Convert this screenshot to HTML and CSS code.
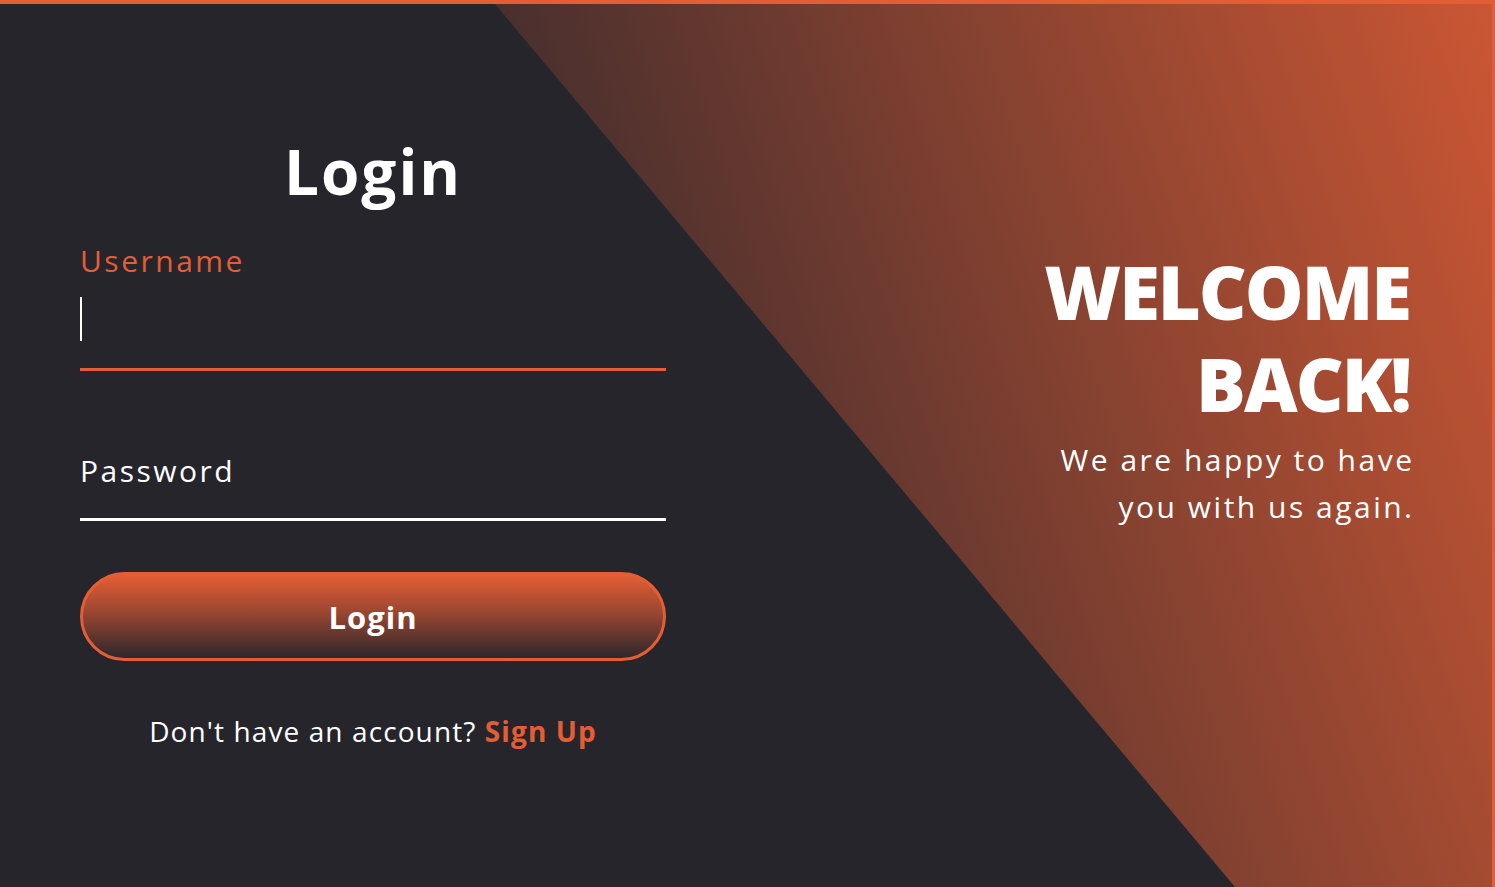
FILE: index.html
```html
<!DOCTYPE html>
<html lang="en">
<head>
<meta charset="utf-8">
<title>Login</title>
<link rel="stylesheet" href="styles.css">
</head>
<body>
<div class="page">
  <form class="login">
    <h1 class="login-title">Login</h1>
    <div class="field field-active">
      <label class="field-label">Username</label>
      <div class="field-input"><span class="caret"></span></div>
    </div>
    <div class="field">
      <label class="field-label field-label-rest">Password</label>
    </div>
    <button type="button" class="btn">Login</button>
    <p class="signup">Don't have an account? <a class="signup-link">Sign Up</a></p>
  </form>
  <div class="welcome">
    <h2 class="welcome-title">WELCOME<br>BACK!</h2>
    <p class="welcome-text">We are happy to have<br>you with us again.</p>
  </div>
</div>
</body>
</html>
```
FILE: styles.css
```css
* { box-sizing: border-box; }
html, body { margin: 0; padding: 0; }
body {
  height: 887px;
  background: #26252c;
  border-top: 4px solid #e45e35;
  border-right: 3px solid #e45e35;
  font-family: "Open Sans", "Liberation Sans", sans-serif;
  color: #ffffff;
  overflow: hidden;
}
.page {
  position: relative;
  height: 100%;
  display: flex;
  justify-content: space-between;
  align-items: flex-start;
}
.page::before {
  content: "";
  position: absolute;
  inset: 0;
  background: linear-gradient(71.5deg, #26252c 29%, #e45e35 111%);
  clip-path: polygon(495px 0, 100% 0, 100% 100%, 1235px 100%);
}
.login {
  position: relative;
  width: 586px;
  margin-left: 80px;
  padding-top: 130px;
  display: flex;
  flex-direction: column;
}
.login-title {
  margin: 0;
  text-align: center;
  font-size: 62px;
  line-height: 74px;
  font-weight: 700;
  letter-spacing: 2px;
}
.field {
  border-bottom: 3px solid #ffffff;
}
.field-active {
  margin-top: 35px;
  border-bottom-color: #e45e35;
}
.field-label {
  display: block;
  font-size: 30px;
  line-height: 36px;
  letter-spacing: 2.5px;
  color: #ffffff;
}
.field-active .field-label { color: #e45e35; }
.field-label-rest {
  margin-top: 82px;
  margin-bottom: 29px;
}
.field-input {
  padding-top: 18px;
  padding-bottom: 27px;
}
.caret {
  display: block;
  width: 2px;
  height: 44px;
  background: #ffffff;
}
.btn {
  margin-top: 51px;
  height: 89px;
  border: 3px solid #e45e35;
  border-radius: 45px;
  background: linear-gradient(to bottom, #e45e35 0%, #9a4631 45%, #2e272c 100%);
  color: #ffffff;
  font-family: "Open Sans", "Liberation Sans", sans-serif;
  font-size: 31px;
  font-weight: 700;
  letter-spacing: 1px;
  padding: 0;
}
.signup {
  margin: 53px 0 0;
  text-align: center;
  font-size: 28px;
  line-height: 34px;
  letter-spacing: 1.1px;
}
.signup-link {
  color: #e45e35;
  font-weight: 700;
}
.welcome {
  position: relative;
  margin-right: 80px;
  padding-top: 242px;
  text-align: right;
}
.welcome-title {
  margin: 0 2px 0 0;
  font-size: 74px;
  line-height: 92px;
  font-weight: 800;
  letter-spacing: -2px;
}
.welcome-text {
  margin: 6px -2.5px 0 0;
  font-size: 30px;
  line-height: 47px;
  letter-spacing: 2.5px;
}
```
